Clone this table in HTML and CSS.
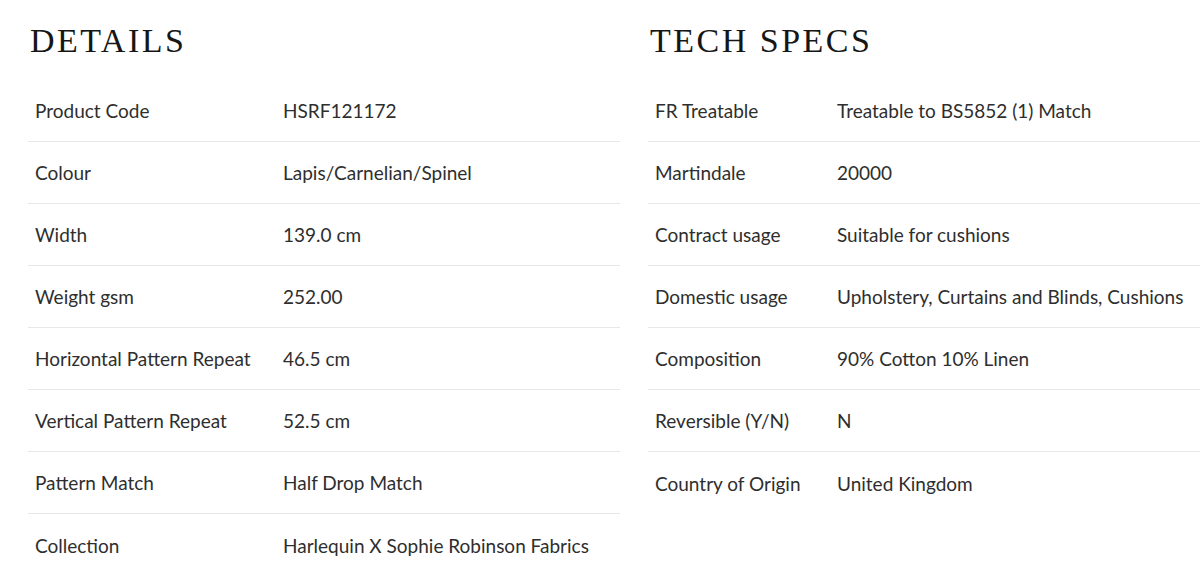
FILE: index.html
```html
<!DOCTYPE html>
<html lang="en">
<head>
<meta charset="utf-8">
<title>Details</title>
<link rel="stylesheet" href="styles.css">
</head>
<body>
<main class="specs">
  <section class="panel details">
    <h2 class="panel-title">DETAILS</h2>
    <div class="rows">
      <div class="row"><span class="label">Product Code</span><span class="value">HSRF121172</span></div>
      <div class="row"><span class="label">Colour</span><span class="value">Lapis/Carnelian/Spinel</span></div>
      <div class="row"><span class="label">Width</span><span class="value">139.0 cm</span></div>
      <div class="row"><span class="label">Weight gsm</span><span class="value">252.00</span></div>
      <div class="row"><span class="label">Horizontal Pattern Repeat</span><span class="value">46.5 cm</span></div>
      <div class="row"><span class="label">Vertical Pattern Repeat</span><span class="value">52.5 cm</span></div>
      <div class="row"><span class="label">Pattern Match</span><span class="value">Half Drop Match</span></div>
      <div class="row"><span class="label">Collection</span><span class="value">Harlequin X Sophie Robinson Fabrics</span></div>
    </div>
  </section>
  <section class="panel tech">
    <h2 class="panel-title">TECH SPECS</h2>
    <div class="rows">
      <div class="row"><span class="label">FR Treatable</span><span class="value">Treatable to BS5852 (1) Match</span></div>
      <div class="row"><span class="label">Martindale</span><span class="value">20000</span></div>
      <div class="row"><span class="label">Contract usage</span><span class="value">Suitable for cushions</span></div>
      <div class="row"><span class="label">Domestic usage</span><span class="value">Upholstery, Curtains and Blinds, Cushions</span></div>
      <div class="row"><span class="label">Composition</span><span class="value">90% Cotton 10% Linen</span></div>
      <div class="row"><span class="label">Reversible (Y/N)</span><span class="value">N</span></div>
      <div class="row"><span class="label">Country of Origin</span><span class="value">United Kingdom</span></div>
    </div>
  </section>
</main>
</body>
</html>
```
FILE: styles.css
```css
html, body {
  margin: 0;
  padding: 0;
  background: #ffffff;
}

body {
  font-family: "Lato", "Liberation Sans", sans-serif;
  color: #2e2e2e;
  overflow: hidden;
}

.specs {
  display: grid;
  grid-template-columns: 592px 552px;
  column-gap: 28px;
  padding-left: 28px;
}

.panel-title {
  margin: 0;
  padding: 21px 0 0 2px;
  height: 80px;
  box-sizing: border-box;
  font-family: "Liberation Serif", "DejaVu Serif", serif;
  font-weight: 400;
  font-size: 34px;
  line-height: 40px;
  letter-spacing: 2.5px;
  color: #161616;
}

.rows {
  display: flex;
  flex-direction: column;
}

.row {
  display: grid;
  height: 62px;
  align-items: center;
  border-bottom: 1px solid #e8e8e8;
  box-sizing: border-box;
  font-size: 19px;
  padding-left: 7px;
}

.row:last-child {
  border-bottom: none;
}

.details .row {
  grid-template-columns: 248px 1fr;
}

.tech .row {
  grid-template-columns: 182px 1fr;
}

.label,
.value {
  white-space: nowrap;
}
```
